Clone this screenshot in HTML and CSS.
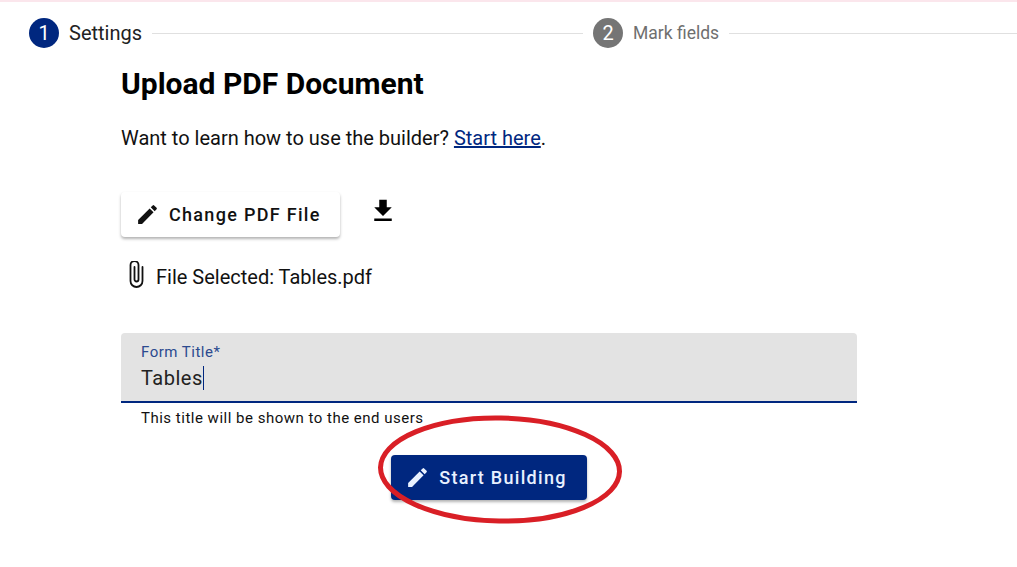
FILE: index.html
```html
<!DOCTYPE html>
<html lang="en">
<head>
    <meta charset="UTF-8">
    <meta name="viewport" content="width=device-width, initial-scale=1.0">
    <title>Upload PDF Document</title>
    <link rel="stylesheet" href="styles.css">
</head>
<body>
    <div class="stepper">
        <div class="step">
            <span class="step-num active">1</span>
            <span class="step-label">Settings</span>
        </div>
        <div class="step-line first"></div>
        <div class="step">
            <span class="step-num">2</span>
            <span class="step-label muted">Mark fields</span>
        </div>
        <div class="step-line"></div>
    </div>

    <div class="content">
        <h1>Upload PDF Document</h1>
        <p class="intro">Want to learn how to use the builder? <a href="#">Start here</a>.</p>

        <div class="file-actions">
            <button class="btn btn-light">
                <svg class="icon" viewBox="0 0 24 24"><path d="M3 17.25V21h3.75L17.81 9.94l-3.75-3.75L3 17.25zM20.71 7.04a1 1 0 0 0 0-1.41l-2.34-2.34a1 1 0 0 0-1.41 0l-1.83 1.83 3.75 3.75 1.83-1.83z"/></svg>
                Change PDF File
            </button>
            <svg class="download" viewBox="0 0 24 24"><path d="M19 9h-4V3H9v6H5l7 7 7-7zM5 18v2h14v-2H5z"/></svg>
        </div>

        <div class="file-selected">
            <svg class="clip" viewBox="0 3 20 32"><path d="M15.5 9V23a6 6 0 0 1-12 0V7a4 4 0 0 1 8 0V21.5a2 2 0 0 1-4 0V9" fill="none" stroke="#111" stroke-width="1.8" stroke-linecap="round"/></svg>
            <span>File Selected: Tables.pdf</span>
        </div>

        <div class="field">
            <label class="field-label">Form Title*</label>
            <div class="field-value">Tables<span class="caret"></span></div>
        </div>
        <div class="field-help">This title will be shown to the end users</div>

        <div class="submit-row">
            <button class="btn btn-primary">
                <svg class="icon" viewBox="0 0 24 24"><path d="M3 17.25V21h3.75L17.81 9.94l-3.75-3.75L3 17.25zM20.71 7.04a1 1 0 0 0 0-1.41l-2.34-2.34a1 1 0 0 0-1.41 0l-1.83 1.83 3.75 3.75 1.83-1.83z"/></svg>
                Start Building
            </button>
        </div>
    </div>

    <!-- red annotation circled over the button -->
    <svg class="annotation" viewBox="0 0 1017 567"><ellipse cx="500" cy="469.5" rx="119.5" ry="51.5" fill="none" stroke="#d91f26" stroke-width="5" transform="rotate(1 500 470)"/></svg>
</body>
</html>
```
FILE: styles.css
```css
body {
    font-family: Roboto, "Liberation Sans", sans-serif;
    margin: 0;
    padding: 0;
    background: #ffffff;
    color: #111111;
    height: 567px;
    overflow: hidden;
    position: relative;
    border-top: 2px solid #fbe6ec;
    box-sizing: border-box;
}
.stepper {
    display: flex;
    align-items: center;
    gap: 10px;
    padding: 16px 0 0 29px;
}
.step {
    display: flex;
    align-items: center;
    gap: 10px;
}
.step-num {
    width: 30px;
    height: 30px;
    border-radius: 50%;
    background: #757575;
    color: #ffffff;
    font-size: 20px;
    line-height: 30px;
    text-align: center;
}
.step-num.active {
    background: #00277f;
}
.step-label {
    font-size: 20px;
    color: #222222;
}
.step-label.muted {
    font-size: 17.5px;
    color: #6f6f6f;
}
.step-line {
    flex: 1;
    height: 1px;
    background: #e0e0e0;
}
.step-line.first {
    flex: 0 0 431px;
}
.content {
    width: 736px;
    margin-left: 121px;
}
h1 {
    margin: 18px 0 0;
    font-size: 30px;
    line-height: 36px;
    font-weight: 700;
    color: #000000;
}
.intro {
    margin: 22px 0 0;
    font-size: 20px;
    line-height: 28px;
}
.intro a {
    color: #00277f;
}
.file-actions {
    display: flex;
    align-items: flex-start;
    gap: 28px;
    margin-top: 40px;
}
.btn {
    display: flex;
    align-items: center;
    gap: 9px;
    border: none;
    border-radius: 4px;
    font-family: inherit;
    font-size: 18px;
    font-weight: 500;
    letter-spacing: 1.3px;
    height: 45px;
    padding: 0 20px 0 14px;
    box-shadow: 0 2px 3px rgba(0, 0, 0, 0.3);
}
.btn-light {
    background: #ffffff;
    color: #111111;
    padding-right: 19px;
}
.btn-primary {
    background: #00277f;
    color: #e8f1ff;
}
.icon {
    width: 25px;
    height: 25px;
    fill: currentColor;
}
.download {
    width: 30px;
    height: 30px;
    margin-top: 4px;
    fill: #000000;
}
.file-selected {
    display: flex;
    align-items: center;
    gap: 9px;
    margin: 24px 0 0 6px;
    font-size: 20px;
}
.clip {
    width: 20px;
    height: 32px;
}
.field {
    margin-top: 40px;
    height: 70px;
    background: #e3e3e3;
    border-radius: 4px 4px 0 0;
    border-bottom: 2px solid #00277f;
    padding: 10px 20px 0;
    box-sizing: border-box;
}
.field-label {
    display: block;
    font-size: 15px;
    line-height: 18px;
    letter-spacing: 0.5px;
    color: #2b4a8f;
}
.field-value {
    font-size: 20px;
    line-height: 30px;
    letter-spacing: 0.5px;
    color: #222222;
    margin-top: 2px;
}
.caret {
    display: inline-block;
    width: 1px;
    height: 24px;
    background: #00277f;
    vertical-align: -5px;
}
.field-help {
    padding: 6px 20px 0;
    font-size: 15px;
    line-height: 18px;
    letter-spacing: 0.5px;
}
.submit-row {
    display: flex;
    justify-content: center;
    margin-top: 28px;
}
.annotation {
    position: absolute;
    top: -2px;
    left: 0;
    width: 1017px;
    height: 567px;
    pointer-events: none;
}
```
